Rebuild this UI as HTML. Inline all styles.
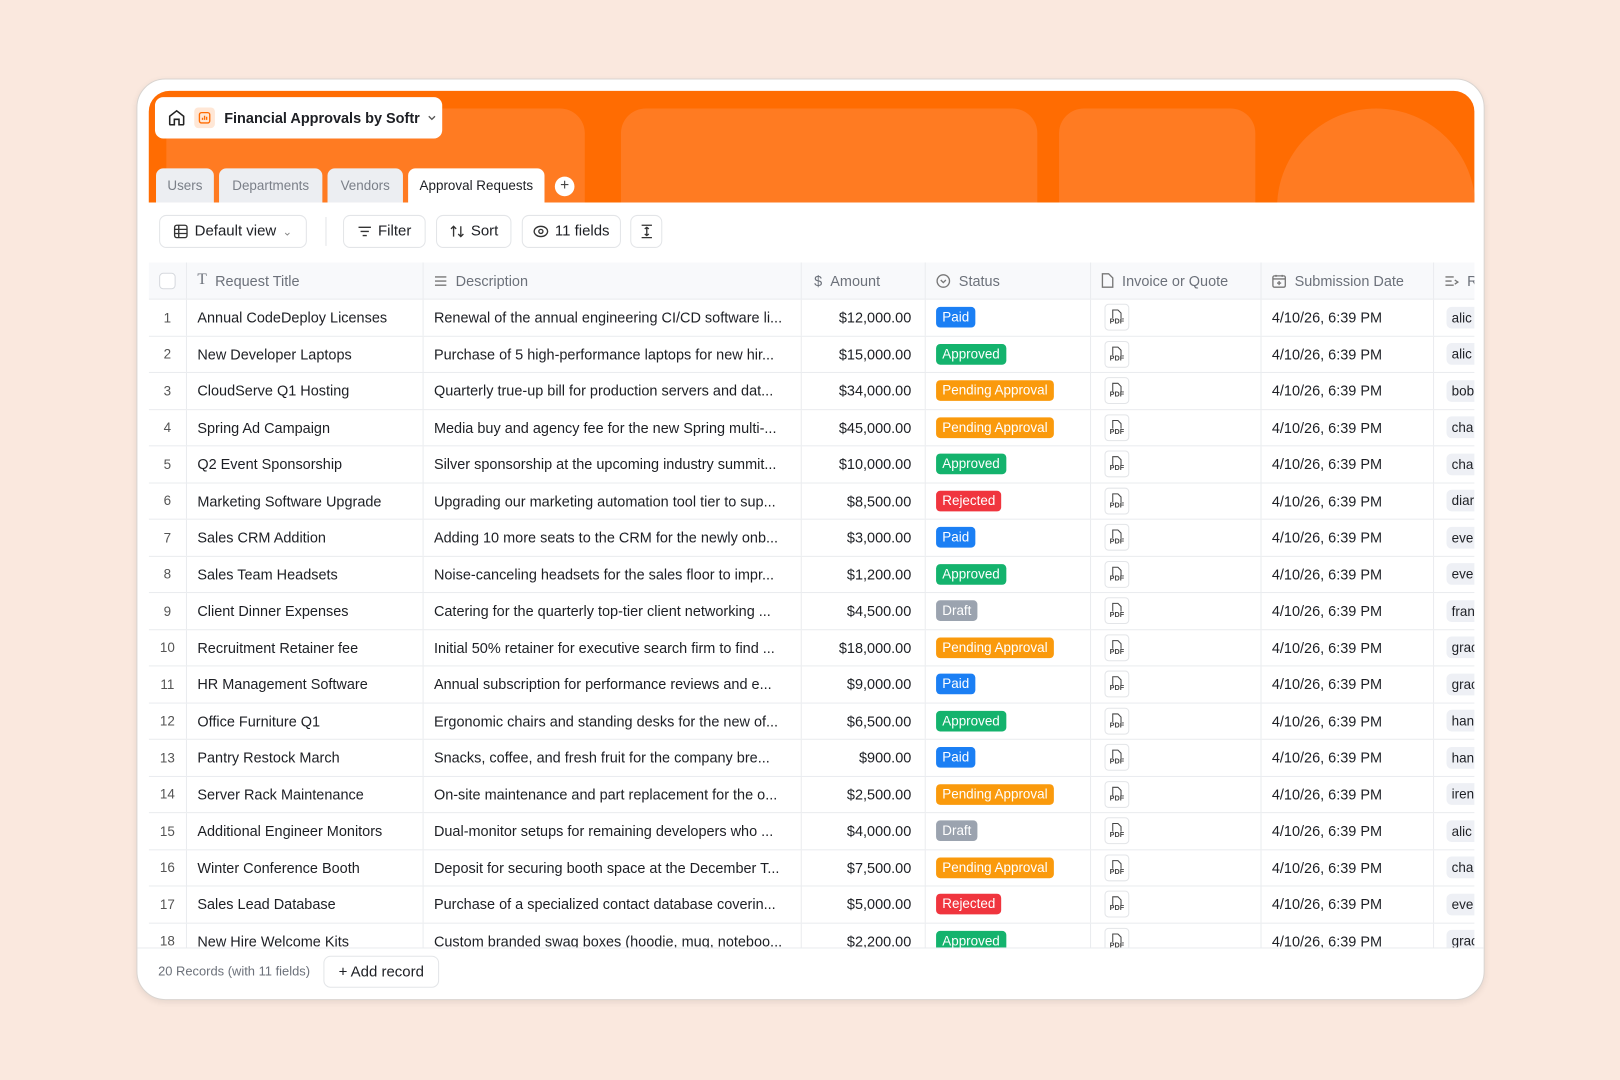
<!DOCTYPE html>
<html><head><meta charset="utf-8"><style>
*{box-sizing:border-box;margin:0;padding:0}
html,body{width:1620px;height:1080px;overflow:hidden;background:#fae8de;font-family:"Liberation Sans",sans-serif;color:#1d1f24}
#w{position:absolute;left:0;top:0;width:1568px;height:1045px;transform:scale(1.0332);transform-origin:0 0}
.card{position:absolute;left:132px;top:76px;width:1305px;height:892px;background:#fff;border:1px solid #d9d4d0;border-radius:28px;box-shadow:0 2px 6px rgba(0,0,0,.08);overflow:hidden}
.hdr{position:absolute;left:11px;top:11px;width:1283px;height:108px;background:#ff6c02;border-radius:20px 20px 0 0;overflow:hidden}
.sh{position:absolute;background:#ff7b22;border-radius:24px}
.pill{position:absolute;left:17px;top:17px;width:278px;height:40px;background:#fff;border-radius:8px;display:flex;align-items:center;font-size:14px;font-weight:bold}
.tab{position:absolute;top:86px;height:33px;background:#eceef2;border-radius:7px 7px 0 0;font-size:13px;color:#7a7f88;display:flex;align-items:center;justify-content:center}
.tab.a{background:#fff;color:#1d1f24}
.btn{position:absolute;top:131px;height:32px;border:1px solid #e3e5e8;border-radius:7px;display:flex;align-items:center;justify-content:center;gap:6px;font-size:14.5px;color:#1d1f24;background:#fff}
.tbl{position:absolute;left:11px;top:177px;width:1283px;height:663px;overflow:hidden}
.row{position:absolute;left:0;height:36px;width:1300px;border-bottom:1px solid #eaecef;display:flex}
.row>div{height:100%;border-right:1px solid #eaecef;display:flex;align-items:center;white-space:nowrap;overflow:hidden;font-size:14px;flex:none}
.th{background:#f8f9fb;color:#6c717a}
.th>div{gap:8px;padding-left:10px}
.c0{width:37px;justify-content:center;color:#555;font-size:13px!important}
.c1{width:229px;padding-left:10px}.c2{width:366px;padding-left:10px}.c3{width:120px;justify-content:flex-end;padding-right:13px}
.c4{width:160px;padding-left:10px}.c5{width:165px;padding-left:13px}.c6{width:167px;padding-left:10px}.c7{width:60px;padding-left:12px}
.b{color:#fff;font-size:13px;padding:3px 6px;border-radius:4px;line-height:14px}
.Paid{background:#1b7ff4}.Approved{background:#14b36d}.Pending{background:#fa9a0c}.Rejected{background:#f0353e}.Draft{background:#9ba3af}
.pdf{width:24px;height:26px;border:1px solid #e3e5e8;border-radius:4px;display:flex;flex-direction:column;align-items:center;justify-content:center;font-size:7px;color:#444;font-weight:bold}
.chip{background:#eef0f5;border-radius:5px;padding:3px 5px;font-size:13px;width:40px;overflow:hidden}
.foot{position:absolute;left:0;top:840px;width:1305px;height:52px;border-top:1px solid #eaecef}
</style></head><body><div id="w">
<div class="card">
 <div class="hdr">
  <div class="sh" style="left:17px;top:17px;width:405px;height:130px"></div>
  <div class="sh" style="left:457px;top:17px;width:403px;height:130px"></div>
  <div class="sh" style="left:881px;top:17px;width:190px;height:130px"></div>
  <div class="sh" style="left:1092px;top:17px;width:192px;height:192px;border-radius:50%"></div>
  <div class="pill" style="left:6px;top:6px">
   <svg style="margin-left:12px" width="18" height="18" viewBox="0 0 24 24" fill="none" stroke="#222" stroke-width="2"><path d="M3 10l9-7 9 7v10a1 1 0 0 1-1 1h-5v-7h-6v7H4a1 1 0 0 1-1-1z"/></svg>
   <span style="margin-left:8px;width:20px;height:20px;background:#ffe7d6;border-radius:4px;display:inline-flex;align-items:center;justify-content:center"><svg width="12" height="12" viewBox="0 0 12 12" fill="none" stroke="#ff6c02" stroke-width="1.3"><rect x="1" y="1" width="10" height="10" rx="2"/><path d="M4 8V6M6 8V4M8 8V5"/></svg></span>
   <span style="margin-left:9px">Financial Approvals by Softr</span>
   <svg style="margin-left:7px" width="10" height="10" viewBox="0 0 10 10" fill="none" stroke="#555" stroke-width="1.3"><path d="M2 3.5l3 3 3-3"/></svg>
  </div>
 </div>
 <div class="tab" style="left:18px;width:56px">Users</div>
 <div class="tab" style="left:79px;width:100px">Departments</div>
 <div class="tab" style="left:184px;width:73px">Vendors</div>
 <div class="tab a" style="left:262px;width:132px">Approval Requests</div>
 <div style="position:absolute;left:404px;top:94px;width:19px;height:19px;border-radius:50%;background:#fff;font-size:15px;line-height:18px;text-align:center;color:#444">+</div>
 <div class="btn" style="left:21px;width:143px"><svg width="14" height="14" viewBox="0 0 14 14" fill="none" stroke="#333" stroke-width="1.3"><rect x="1" y="1" width="12" height="12" rx="2"/><path d="M1 5h12M1 9h12M5 1v12"/></svg>Default view <span style="color:#888;font-size:11px">⌄</span></div>
 <div style="position:absolute;left:182px;top:133px;width:1px;height:28px;background:#e3e5e8"></div>
 <div class="btn" style="left:199px;width:80px"><svg width="14" height="14" viewBox="0 0 14 14" stroke="#333" stroke-width="1.3"><path d="M1 3h12M3 7h8M5 11h4"/></svg>Filter</div>
 <div class="btn" style="left:289px;width:73px"><svg width="15" height="14" viewBox="0 0 15 14" fill="none" stroke="#333" stroke-width="1.3"><path d="M4 12V2M1.5 4.5L4 2l2.5 2.5M11 2v10M8.5 9.5L11 12l2.5-2.5"/></svg>Sort</div>
 <div class="btn" style="left:372px;width:96px"><svg width="15" height="14" viewBox="0 0 15 14" fill="none" stroke="#333" stroke-width="1.3"><ellipse cx="7.5" cy="7" rx="6.5" ry="5"/><circle cx="7.5" cy="7" r="2"/></svg>11 fields</div>
 <div class="btn" style="left:477px;width:31px"><svg width="14" height="14" viewBox="0 0 14 14" fill="none" stroke="#333" stroke-width="1.3"><path d="M2 1h10M2 13h10M7 3v8M5 4.5L7 3l2 1.5M5 9.5L7 11l2-1.5"/></svg></div>
 <div class="tbl" id="t"></div>
 <div class="foot">
  <div style="position:absolute;left:20px;top:15px;font-size:12.5px;color:#6c717a">20 Records (with 11 fields)</div>
  <div class="btn" style="left:180px;top:7px;width:112px;height:31px">+ Add record</div>
 </div>
</div>
</div>
<script>
var R=[["Annual CodeDeploy Licenses","Renewal of the annual engineering CI/CD software li...","$12,000.00","Paid","alic"],
["New Developer Laptops","Purchase of 5 high-performance laptops for new hir...","$15,000.00","Approved","alic"],
["CloudServe Q1 Hosting","Quarterly true-up bill for production servers and dat...","$34,000.00","Pending Approval","bob"],
["Spring Ad Campaign","Media buy and agency fee for the new Spring multi-...","$45,000.00","Pending Approval","cha"],
["Q2 Event Sponsorship","Silver sponsorship at the upcoming industry summit...","$10,000.00","Approved","cha"],
["Marketing Software Upgrade","Upgrading our marketing automation tool tier to sup...","$8,500.00","Rejected","diar"],
["Sales CRM Addition","Adding 10 more seats to the CRM for the newly onb...","$3,000.00","Paid","eve"],
["Sales Team Headsets","Noise-canceling headsets for the sales floor to impr...","$1,200.00","Approved","eve"],
["Client Dinner Expenses","Catering for the quarterly top-tier client networking ...","$4,500.00","Draft","fran"],
["Recruitment Retainer fee","Initial 50% retainer for executive search firm to find ...","$18,000.00","Pending Approval","grac"],
["HR Management Software","Annual subscription for performance reviews and e...","$9,000.00","Paid","grac"],
["Office Furniture Q1","Ergonomic chairs and standing desks for the new of...","$6,500.00","Approved","han"],
["Pantry Restock March","Snacks, coffee, and fresh fruit for the company bre...","$900.00","Paid","han"],
["Server Rack Maintenance","On-site maintenance and part replacement for the o...","$2,500.00","Pending Approval","iren"],
["Additional Engineer Monitors","Dual-monitor setups for remaining developers who ...","$4,000.00","Draft","alic"],
["Winter Conference Booth","Deposit for securing booth space at the December T...","$7,500.00","Pending Approval","cha"],
["Sales Lead Database","Purchase of a specialized contact database coverin...","$5,000.00","Rejected","eve"],
["New Hire Welcome Kits","Custom branded swag boxes (hoodie, mug, noteboo...","$2,200.00","Approved","grac"]];
var g='stroke="#777" fill="none" stroke-width="1.3"';
var h='<div class="row th" style="top:0"><div class="c0" style="padding:0"><span style="width:16px;height:16px;border:1px solid #d6d9de;border-radius:4px;background:#fff"></span></div>'+
'<div class="c1"><b style="font-weight:normal;font-family:Liberation Serif;font-size:15px">T</b>Request Title</div>'+
'<div class="c2"><svg width="13" height="12" viewBox="0 0 13 12" '+g+'><path d="M1 2h11M1 6h11M1 10h11"/></svg>Description</div>'+
'<div class="c3" style="justify-content:flex-start;padding:0 0 0 12px">$&nbsp;&nbsp;Amount</div>'+
'<div class="c4"><svg width="14" height="14" viewBox="0 0 14 14" '+g+'><circle cx="7" cy="7" r="6"/><path d="M4.5 6l2.5 2.5L9.5 6"/></svg>Status</div>'+
'<div class="c5"><svg width="12" height="15" viewBox="0 0 12 15" '+g+'><path d="M1 1h6l4 4v9H1z"/></svg>Invoice or Quote</div>'+
'<div class="c6"><svg width="14" height="14" viewBox="0 0 14 14" '+g+'><rect x="1" y="2" width="12" height="11" rx="1.5"/><path d="M4 1v2M10 1v2M1 5h12M7 7v4M5 9h4"/></svg>Submission Date</div>'+
'<div class="c7"><svg width="14" height="12" viewBox="0 0 14 12" '+g+'><path d="M1 2h8M1 6h6M1 10h8M10 5l3 2-3 2"/></svg>R</div></div>';
R.forEach(function(r,i){var c=r[3].split(" ")[0];
h+='<div class="row" style="top:'+(36+i*35.5)+'px;height:35.5px"><div class="c0">'+(i+1)+'</div><div class="c1">'+r[0]+'</div><div class="c2">'+r[1]+'</div><div class="c3">'+r[2]+'</div><div class="c4"><span class="b '+c+'">'+r[3]+'</span></div><div class="c5"><span class="pdf"><svg width="10" height="9" viewBox="0 0 10 9" fill="none" stroke="#444" stroke-width="1"><path d="M1 9V1h5l3 3v5"/></svg>PDF</span></div><div class="c6">4/10/26, 6:39 PM</div><div class="c7"><span class="chip">'+r[4]+'</span></div></div>';});
document.getElementById('t').innerHTML=h;
</script>
</body></html>
